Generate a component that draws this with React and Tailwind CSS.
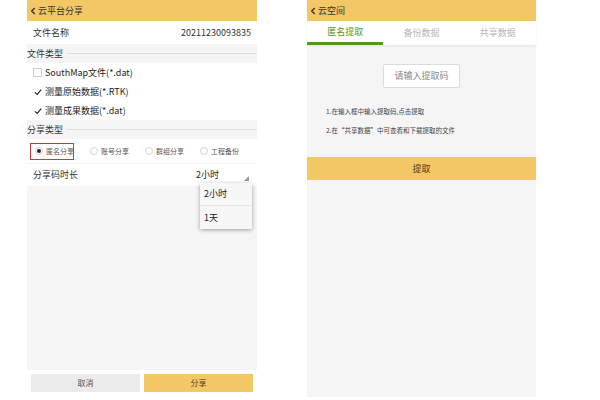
import { ChevronLeft } from 'lucide-react';

const font = { fontFamily: '"Noto Sans CJK SC", "Noto Sans", sans-serif' };

function SectionTitle({ label }) {
  return (
    <div className="h-[19px] bg-[#f5f5f5] flex items-center text-[9px] text-[#333]">
      <span className="pr-1">{label}</span>
      <div className="flex-1 h-px bg-[#dedede]" />
    </div>
  );
}

function Check({ checked, label }) {
  return (
    <div className="h-[19px] bg-white flex items-center pl-[6px] text-[9px] text-[#222]">
      {checked ? (
        <span className="w-[9px] h-[9px] flex items-center justify-center mr-[3px]">
          <svg viewBox="0 0 10 10" className="w-[8px] h-[8px]">
            <path d="M1 5.5 L4 8 L9 2" fill="none" stroke="#222" strokeWidth="1.4" />
          </svg>
        </span>
      ) : (
        <span className="w-[9px] h-[9px] border border-[#ccc] mr-[3px]" />
      )}
      {label}
    </div>
  );
}

function Radio({ on, label }) {
  return (
    <div className="flex items-center gap-[3px] text-[7px] text-[#555] whitespace-nowrap">
      <span className="w-[8px] h-[8px] shrink-0 rounded-full border border-[#d5d5d5] flex items-center justify-center">
        {on && <span className="w-[4px] h-[4px] rounded-full bg-[#222]" />}
      </span>
      {label}
    </div>
  );
}

function SharePanel() {
  return (
    <div className="relative w-[230px] h-[396px] flex flex-col bg-white">
      <div className="h-[21px] bg-[#f4c766] flex items-center pl-[1px] text-[9px] text-[#333]">
        <ChevronLeft className="w-[10px] h-[10px]" strokeWidth={3.5} />
        <span>云平台分享</span>
      </div>
      <div className="h-[23px] flex items-center justify-between px-[6px] text-[9px] text-[#333]">
        <span>文件名称</span>
        <span>20211230093835</span>
      </div>
      <SectionTitle label="文件类型" />
      <Check label="SouthMap文件(*.dat)" />
      <Check checked label="测量原始数据(*.RTK)" />
      <Check checked label="测量成果数据(*.dat)" />
      <SectionTitle label="分享类型" />
      <div className="h-[24px] flex items-center pl-[3px]">
        <div className="border border-[#c9393a] pl-[4px] w-[44px] h-[17px] flex items-center">
          <Radio on label="匿名分享" />
        </div>
        <span className="ml-[16px]"><Radio label="账号分享" /></span>
        <span className="ml-[16px]"><Radio label="群组分享" /></span>
        <span className="ml-[16px]"><Radio label="工程备份" /></span>
      </div>
      <div className="h-[23px] flex items-center justify-between pl-[6px] pr-[8px] text-[9px] text-[#333] border-t border-[#f2f2f2]">
        <span>分享码时长</span>
        <div className="flex items-center gap-[25px]">
          <span className="text-[#222]">2小时</span>
          <svg viewBox="0 0 6 6" className="w-[5px] h-[5px] mt-[6px]">
            <path d="M6 0 L6 6 L0 6 Z" fill="#999" />
          </svg>
        </div>
      </div>
      <div className="flex-1 bg-[#f5f5f5]" />
      <div className="h-[26px] flex items-center gap-[4px] px-[4px] pb-[1px]">
        <div className="flex-1 h-[18px] bg-[#ebebeb] flex items-center justify-center text-[8px] text-[#555]">取消</div>
        <div className="flex-1 h-[18px] bg-[#f4c766] flex items-center justify-center text-[8px] text-[#5a4520]">分享</div>
      </div>
      <div className="absolute left-[173px] top-[183px] w-[52px] bg-[#f7f7f7] shadow-[0_1px_4px_rgba(0,0,0,0.35)] text-[9px] text-[#222]">
        <div className="h-[23px] flex items-center pl-[4px] border-b border-[#e5e5e5]">2小时</div>
        <div className="h-[23px] flex items-center pl-[4px]">1天</div>
      </div>
    </div>
  );
}

function CloudPanel() {
  return (
    <div className="w-[229px] h-[397px] flex flex-col bg-[#f5f5f5]">
      <div className="h-[21px] bg-[#f4c766] flex items-center pl-[1px] text-[9px] text-[#333]">
        <ChevronLeft className="w-[10px] h-[10px]" strokeWidth={3.5} />
        <span>云空间</span>
      </div>
      <div className="h-[24px] bg-white grid grid-cols-3 text-[9px] shadow-[0_1px_2px_rgba(0,0,0,0.08)]">
        <div className="flex flex-col">
          <div className="flex-1 flex items-center justify-center text-[#4f9a1c]">匿名提取</div>
          <div className="h-[3px] bg-[#4f9a1c]" />
        </div>
        <div className="flex items-center justify-center text-[#b5b5b5]">备份数据</div>
        <div className="flex items-center justify-center text-[#b5b5b5]">共享数据</div>
      </div>
      <div className="flex justify-center pt-[19px]">
        <div className="w-[77px] h-[24px] bg-white border border-[#dcdcdc] rounded-[2px] flex items-center justify-center text-[9px] text-[#888]">
          请输入提取码
        </div>
      </div>
      <div className="pl-[19px] pt-[14px] text-[6.5px] text-[#444] leading-[19px]">
        <div>1.在输入框中输入提取码,点击提取</div>
        <div>2.在“共享数据”中可查看和下载提取的文件</div>
      </div>
      <div className="mt-[17px] h-[23px] bg-[#f4c766] flex items-center justify-center text-[9px] text-[#4a3818]">提取</div>
    </div>
  );
}

export default function App() {
  return (
    <div className="w-[600px] h-[400px] bg-white flex pl-[27px] gap-[50px]" style={font}>
      <SharePanel />
      <CloudPanel />
    </div>
  );
}
